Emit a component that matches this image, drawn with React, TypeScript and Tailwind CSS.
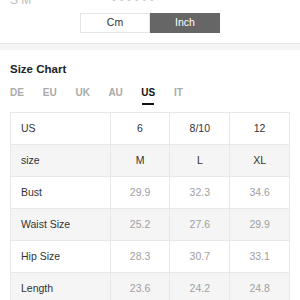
import { useState } from "react";

const rows = [
  { label: "US", values: ["6", "8/10", "12"], strong: true },
  { label: "size", values: ["M", "L", "XL"], strong: true },
  { label: "Bust", values: ["29.9", "32.3", "34.6"] },
  { label: "Waist Size", values: ["25.2", "27.6", "29.9"] },
  { label: "Hip Size", values: ["28.3", "30.7", "33.1"] },
  { label: "Length", values: ["23.6", "24.2", "24.8"] },
];

const tabs = ["DE", "EU", "UK", "AU", "US", "IT"];

export default function App() {
  const [unit, setUnit] = useState("Inch");
  const [tab, setTab] = useState("US");

  return (
    <main className="h-[300px] w-[300px] overflow-hidden bg-white font-['Liberation_Sans',Arial,sans-serif]">
      <div className="relative h-[44px] border-b border-[#e8e8e8]">
        <div className="absolute -top-[9px] left-[10px] text-[12px] text-[#bbb]">S M</div>
        <div className="absolute -top-[9px] left-[112px] text-[12px] text-[#ccc]">• • • • • •</div>
        <div className="flex justify-center pt-[13px]">
          {["Cm", "Inch"].map((u) => (
            <button
              key={u}
              onClick={() => setUnit(u)}
              className={
                unit === u
                  ? "h-[20px] w-[70px] border border-[#666] bg-[#666] text-[10.5px] text-white"
                  : "h-[20px] w-[70px] border border-[#e5e5e5] bg-white text-[10.5px] text-[#333]"
              }
            >
              {u}
            </button>
          ))}
        </div>
      </div>
      <div className="h-[6px] bg-[#f5f5f5]" />

      <section className="px-[10px] pt-[12px]">
        <h2 className="text-[11.5px] font-bold leading-[14px] text-[#222]">Size Chart</h2>
        <div className="mt-[9px] flex">
          {tabs.map((t) => (
            <button
              key={t}
              onClick={() => setTab(t)}
              className={
                tab === t
                  ? "relative h-[26px] w-[32.8px] text-left text-[10px] font-bold leading-[12px] text-[#111]"
                  : "relative h-[26px] w-[32.8px] text-left text-[10px] font-bold leading-[12px] text-[#aaa]"
              }
            >
              <span className="absolute left-0 top-[2px]">{t}</span>
              {tab === t && <span className="absolute left-[1px] top-[18px] h-[2px] w-[12px] bg-[#111]" />}
            </button>
          ))}
        </div>

        <table className="mt-[1px] w-[280px] border-collapse text-[10.5px]">
          <colgroup>
            <col className="w-[100px]" />
            <col className="w-[60px]" />
            <col className="w-[60px]" />
            <col className="w-[60px]" />
          </colgroup>
          <tbody>
            {rows.map((r, i) => (
              <tr key={r.label} className={i % 2 === 1 ? "h-[32px] bg-[#f5f5f5]" : "h-[32px] bg-white"}>
                <td className="border border-[#e8e8e8] pl-[10px] text-[#333]">{r.label}</td>
                {r.values.map((v, j) => (
                  <td
                    key={j}
                    className={
                      r.strong
                        ? "border border-[#e8e8e8] text-center text-[#333]"
                        : "border border-[#e8e8e8] text-center text-[#a0a0a0]"
                    }
                  >
                    {v}
                  </td>
                ))}
              </tr>
            ))}
          </tbody>
        </table>
      </section>
    </main>
  );
}
